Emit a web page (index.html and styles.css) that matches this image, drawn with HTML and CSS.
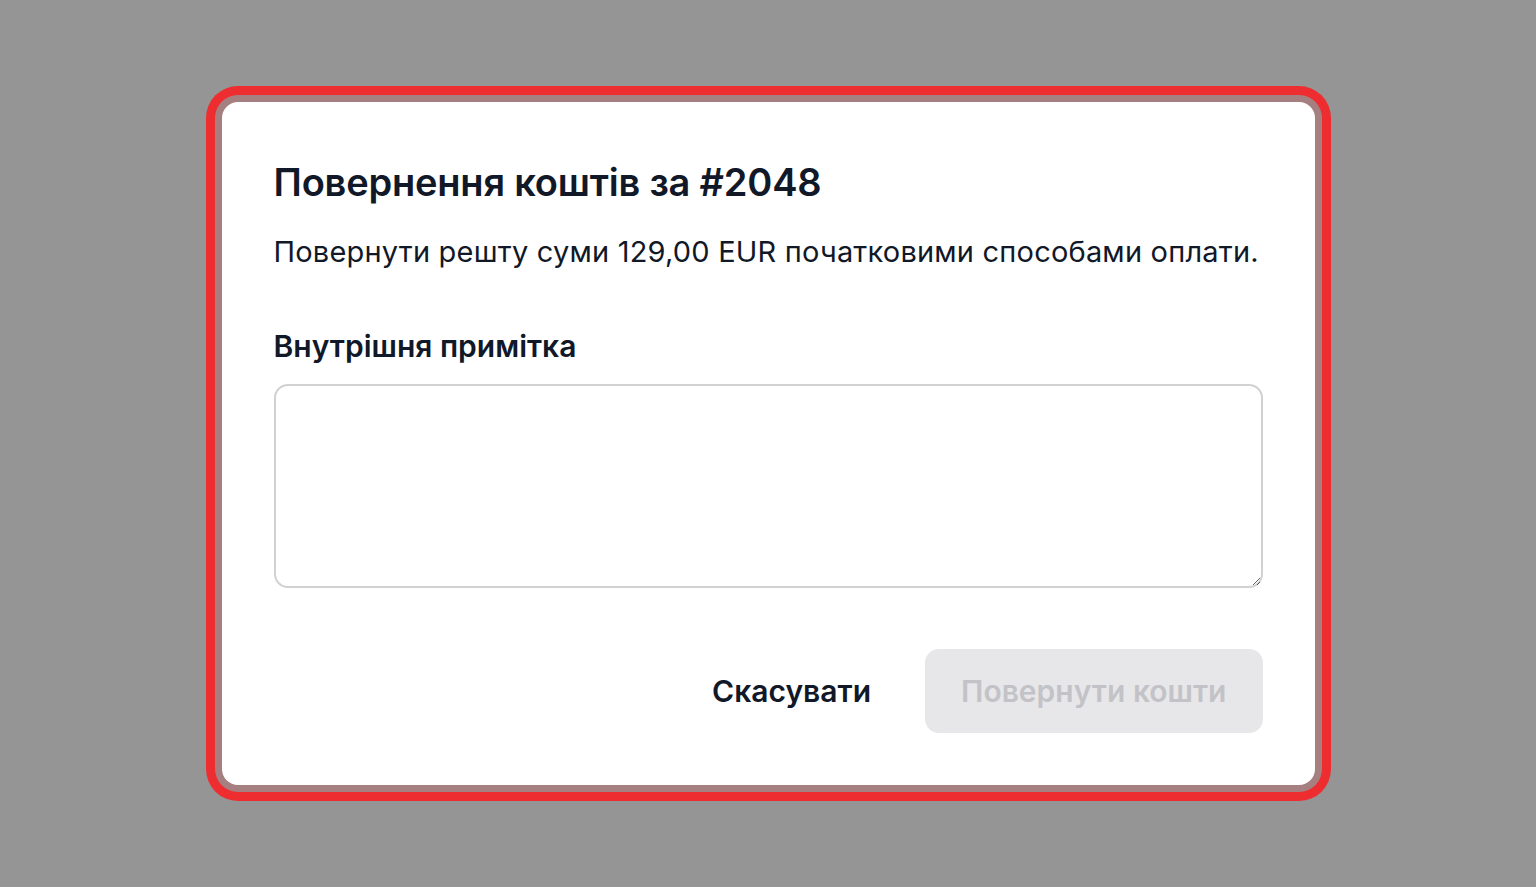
FILE: index.html
```html
<!DOCTYPE html>
<html lang="uk">
<head>
<meta charset="utf-8">
<title>Повернення коштів</title>
<link rel="stylesheet" href="styles.css">
</head>
<body>
<div class="overlay">
  <div class="modal" role="dialog">
    <h1 class="title">Повернення коштів за #2048</h1>
    <p class="desc">Повернути решту суми 129,00 EUR початковими способами оплати.</p>
    <label class="label" for="note">Внутрішня примітка</label>
    <textarea id="note" class="note"></textarea>
    <div class="actions">
      <button class="btn btn-cancel" type="button">Скасувати</button>
      <button class="btn btn-primary" type="button" disabled>Повернути кошти</button>
    </div>
  </div>
</div>
</body>
</html>
```

FILE: styles.css
```css
html, body {
  margin: 0;
  padding: 0;
  height: 100%;
}
body {
  background: #959595;
  font-family: Inter, "Noto Sans", sans-serif;
  color: #111827;
}
.overlay {
  height: 100%;
  display: flex;
  align-items: center;
  justify-content: center;
}
.modal {
  width: 1093px;
  box-sizing: border-box;
  padding: 52px;
  background: #ffffff;
  border-radius: 16px;
  box-shadow: 0 0 0 7px #a67f80, 0 0 0 16px #ee2d30;
  display: flex;
  flex-direction: column;
}
.title {
  margin: 0;
  font-size: 38px;
  font-weight: 600;
  line-height: 56px;
  letter-spacing: -0.2px;
}
.desc {
  margin: 22px 0 0;
  font-size: 29px;
  line-height: 40px;
  font-weight: 400;
  letter-spacing: 0.2px;
}
.label {
  margin-top: 54px;
  font-size: 30px;
  font-weight: 600;
  line-height: 40px;
}
.note {
  margin-top: 18px;
  height: 204px;
  box-sizing: border-box;
  border: 2px solid #d1d1d4;
  border-radius: 14px;
  resize: vertical;
  font: inherit;
  padding: 12px 16px;
}
.actions {
  margin-top: 61px;
  display: flex;
  justify-content: flex-end;
  align-items: center;
  gap: 18px;
}
.btn {
  font-family: inherit;
  font-size: 30px;
  font-weight: 600;
  border: none;
  border-radius: 14px;
  height: 84px;
  padding: 0 36px;
  cursor: pointer;
}
.btn-cancel {
  background: transparent;
  color: #111827;
}
.btn-primary {
  background: #e7e7e9;
  color: #c3c3c7;
}
```
